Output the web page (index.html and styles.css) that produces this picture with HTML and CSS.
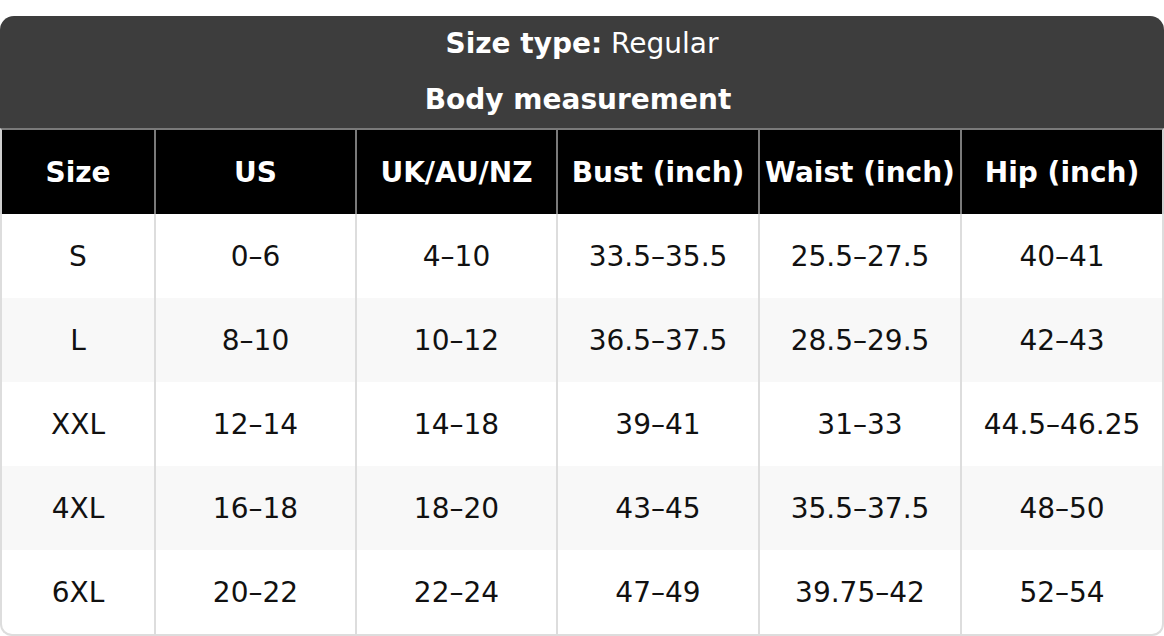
FILE: index.html
```html
<!DOCTYPE html>
<html lang="en">
<head>
<meta charset="utf-8">
<title>Size chart</title>
<link rel="stylesheet" href="styles.css">
</head>
<body>
<div class="chart">
  <table class="sizes">
    <colgroup>
      <col class="c1"><col class="c2"><col class="c3"><col class="c4"><col class="c5"><col class="c6">
    </colgroup>
    <thead>
      <tr class="title"><th colspan="6"><b>Size type:</b> Regular</th></tr>
      <tr class="sub"><th colspan="6">Body measurement</th></tr>
      <tr class="cols">
        <th>Size</th><th>US</th><th>UK/AU/NZ</th><th>Bust (inch)</th><th>Waist (inch)</th><th>Hip (inch)</th>
      </tr>
    </thead>
    <tbody>
      <tr><td>S</td><td>0–6</td><td>4–10</td><td>33.5–35.5</td><td>25.5–27.5</td><td>40–41</td></tr>
      <tr><td>L</td><td>8–10</td><td>10–12</td><td>36.5–37.5</td><td>28.5–29.5</td><td>42–43</td></tr>
      <tr><td>XXL</td><td>12–14</td><td>14–18</td><td>39–41</td><td>31–33</td><td>44.5–46.25</td></tr>
      <tr><td>4XL</td><td>16–18</td><td>18–20</td><td>43–45</td><td>35.5–37.5</td><td>48–50</td></tr>
      <tr><td>6XL</td><td>20–22</td><td>22–24</td><td>47–49</td><td>39.75–42</td><td>52–54</td></tr>
    </tbody>
  </table>
</div>
</body>
</html>
```
FILE: styles.css
```css
html, body {
  margin: 0;
  padding: 0;
  background: #ffffff;
}

body {
  font-family: "DejaVu Sans", "Liberation Sans", sans-serif;
  font-size: 28px;
  color: #111111;
}

.chart {
  padding-top: 16px;
  width: 1164px;
}

.sizes {
  width: 1164px;
  table-layout: fixed;
  border-collapse: separate;
  border-spacing: 0;
}

.c1 { width: 154px; }
.c2 { width: 201px; }
.c3 { width: 201px; }
.c4 { width: 202px; }
.c5 { width: 202px; }
.c6 { width: 204px; }

.sizes th,
.sizes td {
  text-align: center;
  white-space: nowrap;
  padding: 0;
}

.title th,
.sub th {
  background: #3d3d3d;
  color: #ffffff;
  height: 56px;
  line-height: 32px;
  font-weight: bold;
}

.sub th {
  padding-right: 8px;
}

.title th {
  font-weight: normal;
  border-radius: 14px 14px 0 0;
  vertical-align: middle;
}

.title b {
  font-weight: bold;
}

.cols th {
  background: #000000;
  color: #ffffff;
  font-weight: bold;
  height: 84px;
  border-top: 2px solid #7a7a7a;
  border-left: 2px solid #7a7a7a;
}

.cols th:first-child {
  border-left-color: #cfcfcf;
}

.cols th:last-child {
  border-right: 2px solid #cfcfcf;
}

.sizes td {
  height: 84px;
  background: #ffffff;
  border-left: 2px solid #dddddd;
}

.sizes td:last-child {
  border-right: 2px solid #dddddd;
}

.sizes tbody tr:nth-child(even) td {
  background: #f8f8f8;
}

.sizes tbody tr:last-child td {
  border-bottom: 2px solid #dddddd;
}

.sizes tbody tr:last-child td:first-child {
  border-bottom-left-radius: 12px;
}

.sizes tbody tr:last-child td:last-child {
  border-bottom-right-radius: 12px;
}
```
